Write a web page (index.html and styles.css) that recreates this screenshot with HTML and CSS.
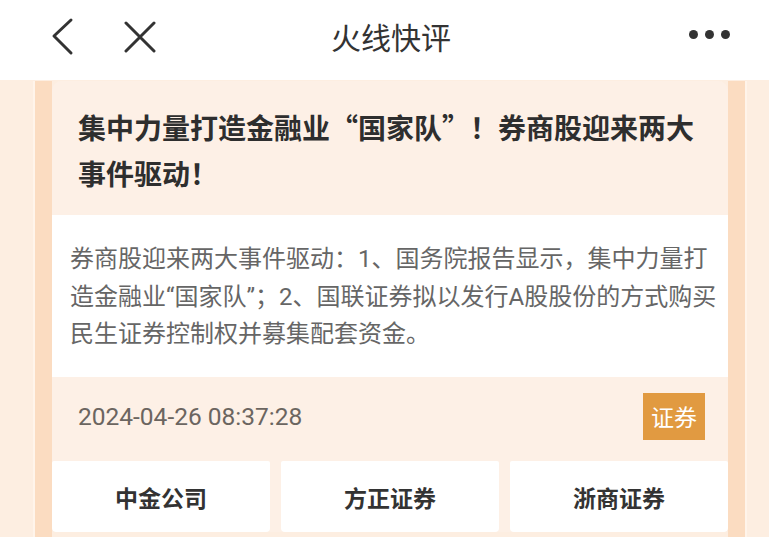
FILE: index.html
```html
<!DOCTYPE html>
<html lang="zh">
<head>
<meta charset="utf-8">
<link rel="stylesheet" href="styles.css">
</head>
<body>
<div class="app">
  <header class="header">
    <div class="nav-left">
      <svg class="icon-back" width="24" height="40" viewBox="0 0 24 40"><path d="M21 3 L4 19 L21 36" fill="none" stroke="#333" stroke-width="3" stroke-linecap="round" stroke-linejoin="round"/></svg>
      <svg class="icon-close" width="34" height="32" viewBox="0 0 34 32"><path d="M3 2 L31 30 M31 2 L3 30" fill="none" stroke="#333" stroke-width="3" stroke-linecap="round"/></svg>
    </div>
    <div class="title">火线快评</div>
    <div class="nav-right">
      <span class="dot"></span><span class="dot"></span><span class="dot"></span>
    </div>
  </header>
  <main class="page">
    <div class="outer"></div>
    <div class="line"></div>
    <div class="band"></div>
    <article class="card">
      <section class="card-head">
        <h1 class="headline">集中力量打造金融业“国家队”！券商股迎来两大事件驱动！</h1>
      </section>
      <section class="card-body">
        <p class="summary">券商股迎来两大事件驱动：1、国务院报告显示，集中力量打造金融业“国家队”；2、国联证券拟以发行A股股份的方式购买民生证券控制权并募集配套资金。</p>
      </section>
      <section class="card-foot">
        <div class="meta">
          <span class="date">2024-04-26 08:37:28</span>
          <span class="badge">证券</span>
        </div>
        <div class="tags">
          <div class="tag">中金公司</div>
          <div class="tag">方正证券</div>
          <div class="tag">浙商证券</div>
        </div>
      </section>
    </article>
    <div class="band"></div>
    <div class="line"></div>
    <div class="outer outer-right"></div>
  </main>
</div>
</body>
</html>
```
FILE: styles.css
```css
* { box-sizing: border-box; }
html, body {
  margin: 0;
  padding: 0;
  width: 769px;
  height: 537px;
  overflow: hidden;
  background: #fff;
  font-family: Roboto, "Noto Sans CJK SC", sans-serif;
}
.app {
  display: flex;
  flex-direction: column;
  height: 537px;
}
.header {
  height: 80px;
  flex: none;
  display: flex;
  align-items: center;
  position: relative;
  background: #fff;
}
.nav-left {
  display: flex;
  align-items: center;
  padding-left: 50px;
  gap: 50px;
  margin-top: -6px;
}
.icon-back { display: block; }
.icon-close { display: block; margin-left: -1px; }
.title {
  position: absolute;
  left: 0;
  right: 0;
  top: 16px;
  text-align: center;
  font-size: 30px;
  line-height: 40px;
  color: #333;
  font-family: "Noto Sans CJK SC", sans-serif;
  font-weight: 400;
  pointer-events: none;
  padding-left: 13px;
}
.nav-right {
  margin-left: auto;
  margin-right: 39px;
  margin-top: -12px;
  display: flex;
  gap: 7px;
}
.dot {
  width: 9px;
  height: 9px;
  border-radius: 50%;
  background: #333;
}
.page {
  flex: 1;
  display: flex;
  background: #fdeee1;
  padding-top: 1px;
}
.outer { width: 33px; flex: none; background: #fdeee1; }
.outer-right { width: 22px; }
.line { width: 2px; flex: none; background: #fff4ea; }
.band { width: 17px; flex: none; background: #fbdcc1; }
.card {
  width: 676px;
  flex: none;
  display: flex;
  flex-direction: column;
  border-radius: 10px 10px 4px 4px;
  overflow: hidden;
  background: #fdf0e6;
  height: 451px;
}
.card-head {
  height: 134px;
  padding: 23px 20px 0 26px;
  background: #fdf0e6;
}
.headline {
  margin: 0;
  font-size: 28px;
  line-height: 46px;
  font-weight: 700;
  color: #2e2e2e;
  font-family: "Noto Sans CJK SC", sans-serif;
}
.card-body {
  height: 162px;
  background: #fff;
  padding: 26px 4px 0 18px;
}
.summary {
  margin: 0;
  font-size: 24px;
  line-height: 37.5px;
  color: #666;
}
.card-foot {
  flex: 1;
  display: flex;
  flex-direction: column;
  background: #fdf0e6;
}
.meta {
  height: 84px;
  display: flex;
  align-items: flex-start;
  justify-content: space-between;
  padding: 16px 23px 0 26px;
}
.date {
  font-size: 24.5px;
  line-height: 47px;
  color: #6b6560;
}
.badge {
  width: 62px;
  height: 47px;
  background: #e19a41;
  color: #fff;
  font-size: 23px;
  line-height: 47px;
  text-align: center;
  font-family: "Noto Sans CJK SC", sans-serif;
}
.tags {
  display: flex;
  gap: 11px;
  flex: 1;
}
.tag {
  flex: 1;
  background: #fff;
  border-radius: 2px 2px 4px 4px;
  display: flex;
  align-items: center;
  justify-content: center;
  font-size: 23px;
  font-weight: 700;
  color: #333;
  font-family: "Noto Sans CJK SC", sans-serif;
}
```
